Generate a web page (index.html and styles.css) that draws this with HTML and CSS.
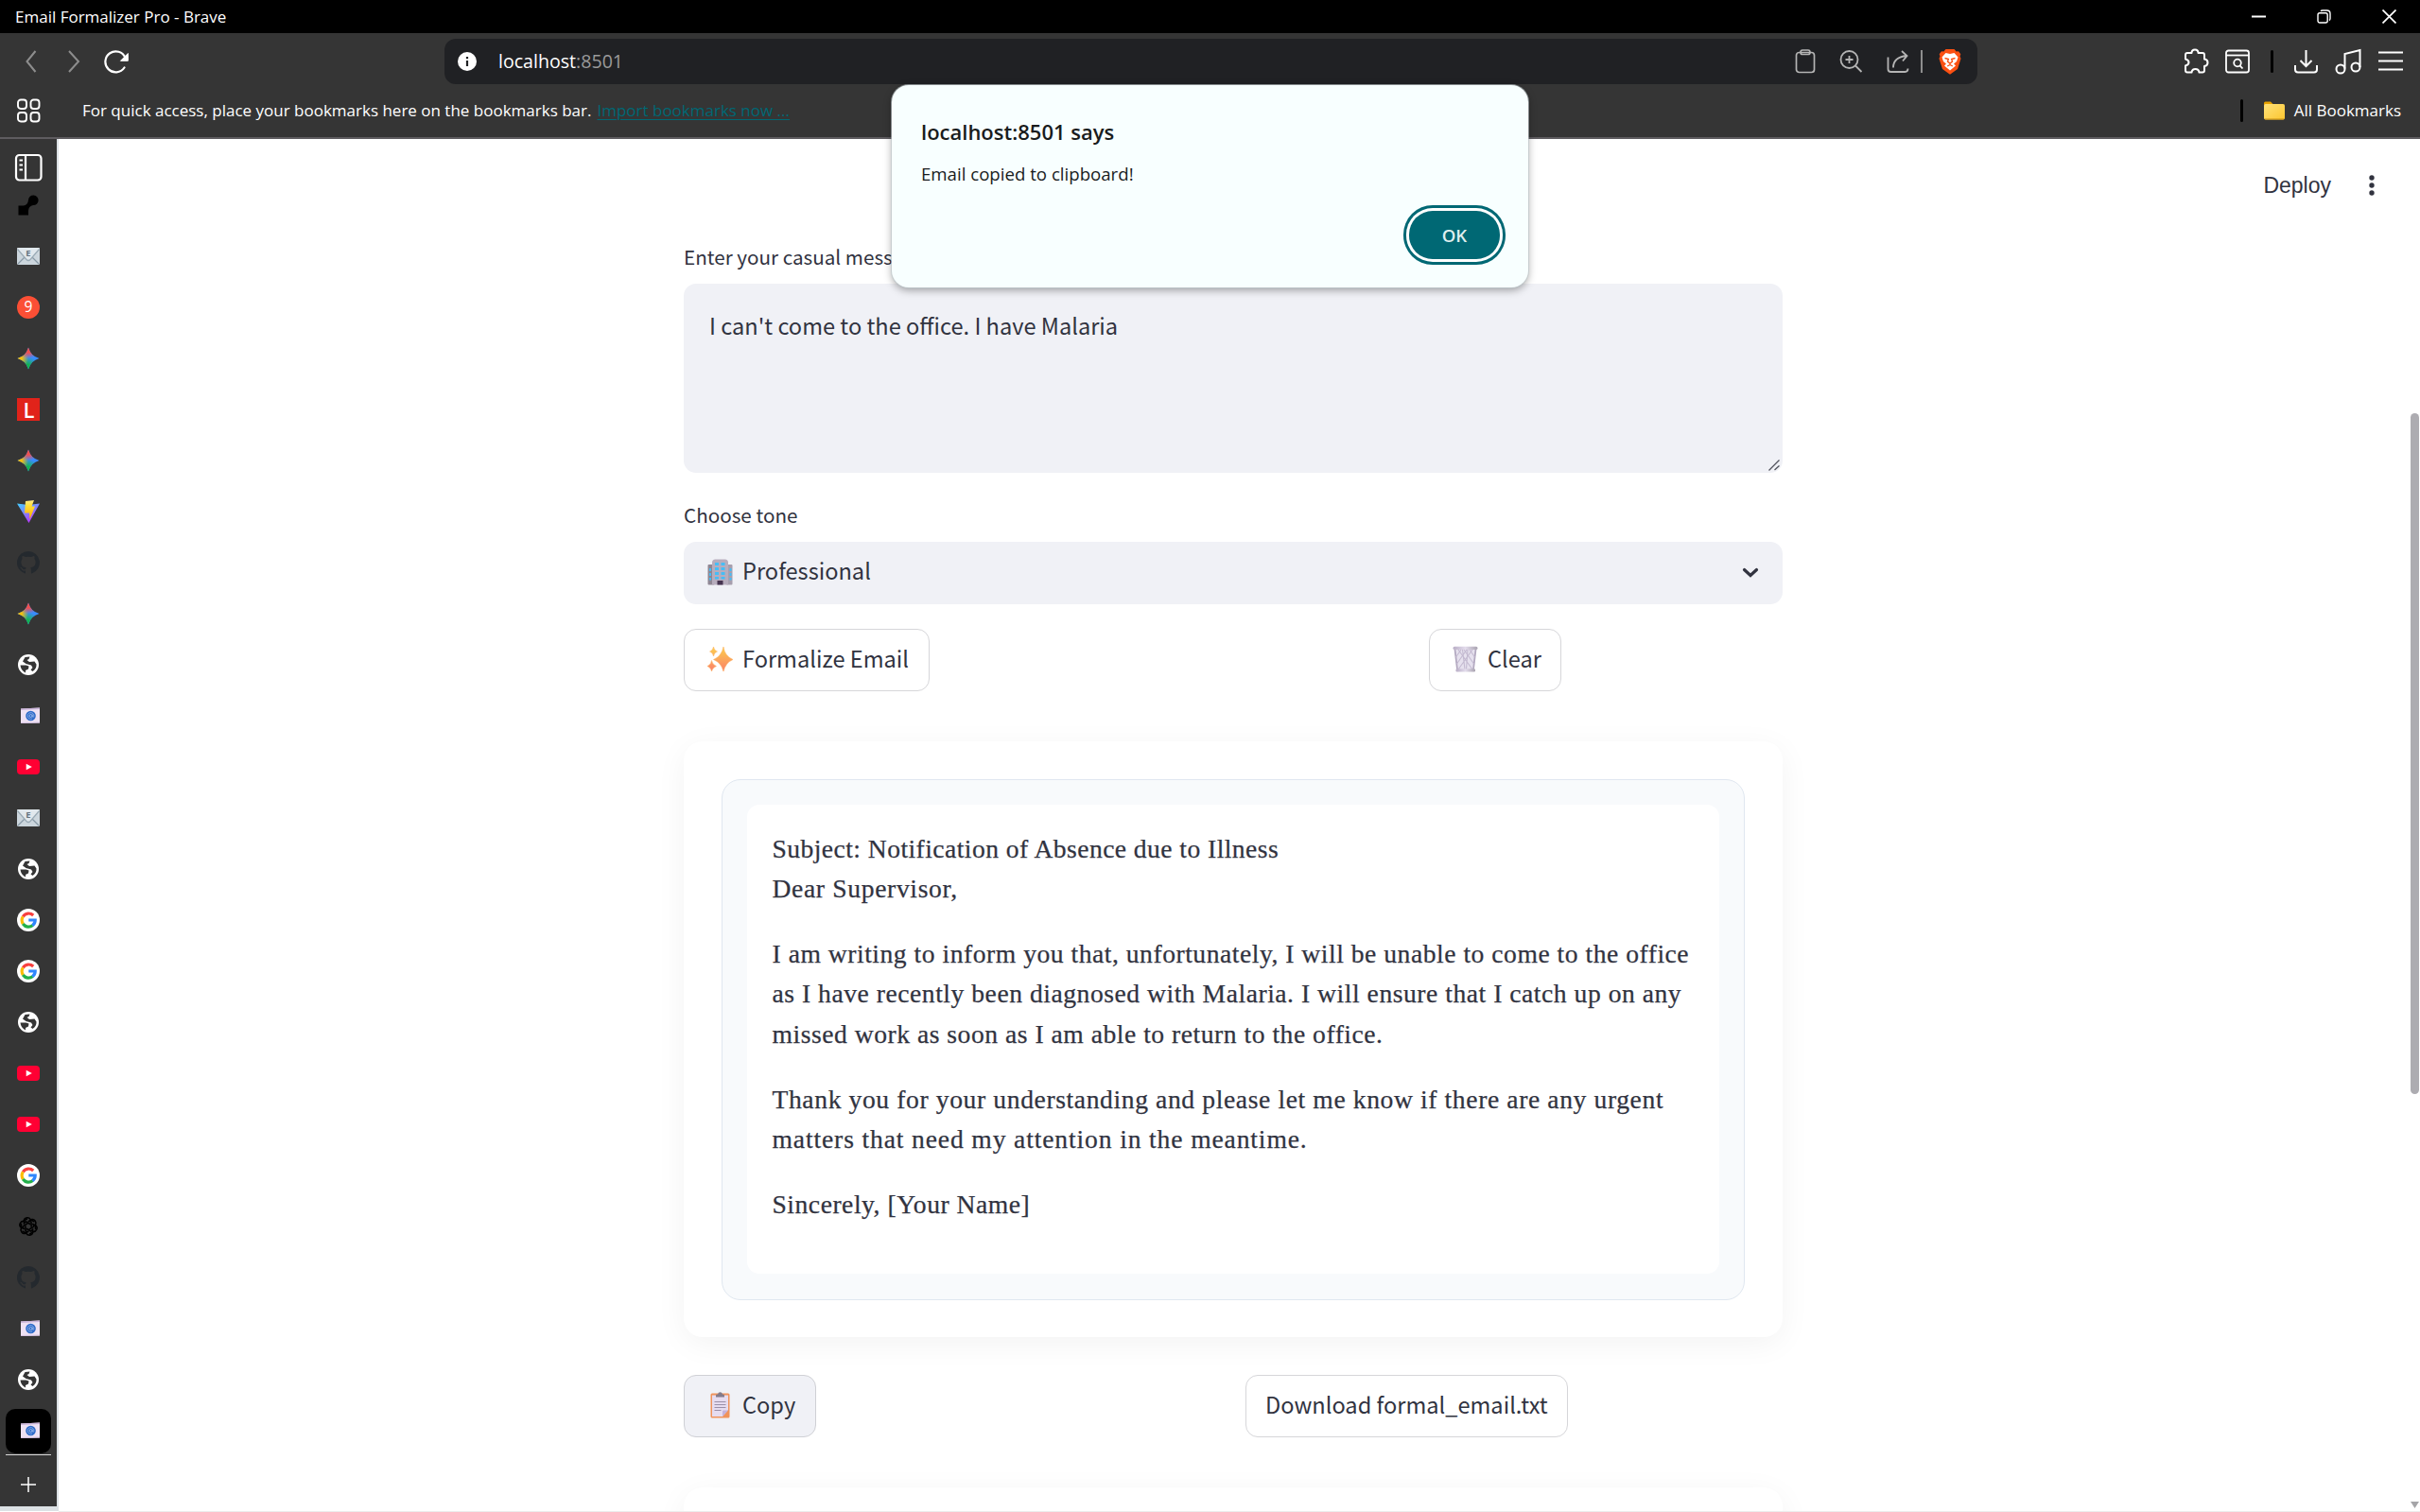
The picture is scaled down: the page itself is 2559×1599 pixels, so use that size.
FILE: index.html
```html
<!DOCTYPE html>
<html lang="en">
<head>
<meta charset="utf-8">
<title>Email Formalizer Pro</title>
<link rel="stylesheet" href="styles.css">
</head>
<body>
<svg class="defs" width="0" height="0" aria-hidden="true">
  <defs>
    <linearGradient id="vite-body" x1="0" y1="0" x2=".6" y2="1"><stop offset="0" stop-color="#41d1ff"/><stop offset="1" stop-color="#bd34fe"/></linearGradient>
    <linearGradient id="vite-bolt" x1="0" y1="0" x2="0" y2="1"><stop offset="0" stop-color="#ffea83"/><stop offset=".3" stop-color="#ffdd35"/><stop offset="1" stop-color="#ffa800"/></linearGradient>
    <linearGradient id="spark" x1="0" y1="0" x2="0" y2="1"><stop offset="0" stop-color="#fcd04a"/><stop offset="1" stop-color="#fb7d6b"/></linearGradient>
    <linearGradient id="folder" x1="0" y1="0" x2="1" y2="1"><stop offset="0" stop-color="#ffe27a"/><stop offset="1" stop-color="#fcc62f"/></linearGradient>
    <linearGradient id="bin" x1="0" y1="0" x2="1" y2="0"><stop offset="0" stop-color="#b9aec6"/><stop offset=".5" stop-color="#e3dcec"/><stop offset="1" stop-color="#a9a3b0"/></linearGradient>
    <symbol id="mail" viewBox="0 0 24 24">
      <rect y="3" width="24" height="18" rx="1.5" fill="#ccd6dd"/>
      <path d="M1 20 9 12M23 20 15 12" stroke="#8899a6" stroke-width="1.2"/>
      <path d="M0 4.200C0 3.500.6 3 1.500 3H22.500C23.400 3 24 3.500 24 4.200L14 15.500Q12 17.500 10 15.500Z" fill="#e1e8ed"/>
      <path d="M.5 4.500 10 15.500Q12 17.500 14 15.500L23.500 4.500" fill="none" stroke="#99aab5" stroke-width="1.200"/>
      <text x="12" y="12" text-anchor="middle" font-family="Open Sans, sans-serif" font-weight="700" font-size="9.500" fill="#66757f">E</text>
    </symbol>
    <symbol id="gpt" viewBox="0 0 24 24">
      <g fill="none" stroke="#000" stroke-width="1.700">
        <path id="petal" d="M14.500 9.500 9 6.500Q7 7.500 7 9.500V4.500C7.500 1.800 12.500.800 14.500 4L19 6.500"/>
        <use href="#petal" transform="rotate(60 12 12)"/><use href="#petal" transform="rotate(120 12 12)"/>
        <use href="#petal" transform="rotate(180 12 12)"/><use href="#petal" transform="rotate(240 12 12)"/><use href="#petal" transform="rotate(300 12 12)"/>
      </g>
    </symbol>
    <symbol id="github" viewBox="0 0 24 24">
      <path fill="#24292e" d="M12 0a12 12 0 0 0-3.800 23.400c.6.100.8-.3.800-.6v-2.200c-3.300.7-4-1.400-4-1.400-.6-1.400-1.400-1.800-1.400-1.800-1-.7.100-.7.100-.7 1.200.1 1.900 1.200 1.900 1.200 1 1.900 2.800 1.300 3.500 1 .1-.8.400-1.300.7-1.600-2.700-.3-5.400-1.300-5.400-6 0-1.300.5-2.400 1.200-3.200-.1-.3-.5-1.500.1-3.200 0 0 1-.3 3.300 1.200a11.500 11.500 0 0 1 6 0C17.300 4.600 18.300 4.900 18.300 4.900c.6 1.700.2 2.900.1 3.200.8.8 1.200 1.900 1.200 3.200 0 4.700-2.800 5.700-5.500 6 .4.400.8 1.100.8 2.200v3.300c0 .3.200.7.800.6A12 12 0 0 0 12 0z"/>
    </symbol>
    <symbol id="globe" viewBox="0 0 24 24">
      <circle cx="12" cy="12" r="11" fill="#fff"/>
      <path d="M3.500 12.500H9.500L12.500 13.500 12 16.500 9 18 9 20.500Q4 18 3.500 12.500ZM8.500 4 13.500 3.500 12.500 6 10.500 7 13 9 18.500 8.500 20.500 11.500Q20.800 16 16.500 19L14.500 17.500 16.500 15 15 12.500 9.500 11 6 8.500Z" fill="#353535"/>
    </symbol>
    <symbol id="card" viewBox="0 0 24 24">
      <path d="M4 4.500 24 3.500V19.500L4 20Z" fill="#eee1f3"/>
      <path d="M4 4.500 24 3.500V5L4 6Z" fill="#cbb5da"/>
      <path d="M4 19 24 18.500V19.500L4 20Z" fill="#d6c2e2"/>
      <circle cx="14.500" cy="12" r="5.300" fill="#2f6bc8"/>
      <circle cx="14.500" cy="12" r="1.500" fill="none" stroke="#9dbbee" stroke-width=".9"/>
      <path d="M16.300 10.500V13Q17.800 14 17.900 12A3.400 3.400 0 1 0 16 15.100" fill="none" stroke="#9dbbee" stroke-width=".7"/>
    </symbol>
    <symbol id="youtube" viewBox="0 0 24 24">
      <rect y="4" width="24" height="16" rx="4" fill="#ff0033"/><path d="M9.700 8.700 15.800 12 9.700 15.300Z" fill="#fff"/>
    </symbol>
    <symbol id="google" viewBox="0 0 24 24">
      <circle cx="12" cy="12" r="12" fill="#fff"/>
      <g fill="none" stroke-width="3.200">
        <path d="M6.300 8.300A7.100 7.100 0 0 1 17.200 7" stroke="#f8403f"/>
        <path d="M6.400 16A7.100 7.100 0 0 1 6.300 8.300" stroke="#fbbc05"/>
        <path d="M16.600 17.600A7.100 7.100 0 0 1 6.300 16" stroke="#24b04b"/>
        <path d="M12.300 12H19.200A7.100 7.100 0 0 1 16.400 17.700" stroke="#2f86fd"/>
      </g>
    </symbol>
  </defs>
</svg>

<header class="titlebar">
  <span class="window-title">Email Formalizer Pro - Brave</span>
  <span class="window-controls">
    <svg width="15" height="15"><path d="M0 7.500H15" stroke="#fff" stroke-width="2"/></svg>
    <svg width="15" height="15" fill="none" stroke="#fff" stroke-width="1.400"><rect x="1" y="3.800" width="10.200" height="10.200" rx="2"/><path d="M4 1.800Q4.500 1 6 1H10.500Q14 1 14 4.500V9.500Q14 11 13 11.500"/></svg>
    <svg width="15" height="15"><path d="M.5.500 14.500 14.500M14.500.500.500 14.500" stroke="#fff" stroke-width="1.700"/></svg>
  </span>
</header>

<nav class="toolbar">
  <svg class="nav-arrow" width="26" height="26"><path d="M17.500 2 8.500 13 17.500 24" fill="none" stroke="#8d8d8d" stroke-width="2"/></svg>
  <svg class="nav-arrow" width="26" height="26"><path d="M8 2 18 13 8 24" fill="none" stroke="#8d8d8d" stroke-width="2"/></svg>
  <svg width="26" height="26"><path d="M21.500 19.500A11 11 0 1 1 22.500 9" fill="none" stroke="#fff" stroke-width="2.200" stroke-linecap="round"/><path d="M25.300 4.500V12.300H17.500Z" fill="#fff" stroke="#fff" stroke-linejoin="round"/></svg>
  <div class="address">
    <svg width="20" height="20"><circle cx="10" cy="10" r="10" fill="#fff"/><path d="M10 9V15M10 5V7.200" stroke="#202124" stroke-width="2.200"/></svg>
    <span class="url">localhost<span class="port">:8501</span></span>
    <span class="address-icons">
      <svg width="24" height="26" fill="none" stroke="#b4b4b4" stroke-width="1.700"><rect x="2.500" y="3.500" width="19" height="21" rx="3"/><path d="M7 3.500Q7 1 9 1H15Q17 1 17 3.500Q17 5.500 15 5.500H9Q7 5.500 7 3.500Z"/></svg>
      <svg width="26" height="26" fill="none" stroke="#b4b4b4" stroke-width="1.800"><circle cx="10.500" cy="11" r="9"/><path d="M17 17.500 23.500 24M10.500 7V15M6.500 11H14.500"/></svg>
      <svg width="26" height="26" fill="none" stroke="#b4b4b4" stroke-width="1.800"><path d="M2.500 8.500V21Q2.500 24 5.500 24H20.500Q23.500 24 23.500 20.500"/><path d="M8 19.500Q8 8.500 22 7M17 2 22.500 7 18 12.500"/></svg>
      <i class="address-divider"></i>
      <svg width="26" height="28"><path d="M8.500 1H17.500L19.700 3.500 22 3.200 24.300 6.300 23.500 8.500 24.500 11 21 22 13 27.800 5 22 1.500 11 2.500 8.500 1.700 6.300 4 3.200 6.300 3.500Z" fill="#fb5012"/><path d="M8.500 5 13 6 17.500 5 21.500 9.500 20 14 17 16.500 19 18.500 13 23.500 7 18.500 9 16.500 6 14 4.500 9.500Z" fill="#fff"/><path d="M7.500 10.500 11.300 11.500 10.500 14 13 16 15.500 14 14.700 11.500 18.500 10.500M13 16V18M10.200 19 13 17.500 15.800 19" fill="none" stroke="#fb5012" stroke-width="1.400"/></svg>
    </span>
  </div>
  <div class="toolbar-icons">
    <svg width="28" height="28" fill="none" stroke="#fff" stroke-width="2" stroke-linejoin="round"><path d="M5 5H9.500Q9.500 1.500 13 1.500T16.500 5H21Q23 5 23 7V11.500Q26.500 12 26.500 15.200T23 19V23.500Q23 25.500 21 25.500H17.500Q17 22 13.500 22T9.500 25.500H5Q3 25.500 3 23.500V18.500Q6.500 17.500 6.500 15T3 11.500V7Q3 5 5 5Z"/></svg>
    <svg width="26" height="26" fill="none" stroke="#fff" stroke-width="1.800"><rect x="1" y="1.500" width="24" height="23" rx="2.500"/><path d="M1 6.500H25"/><circle cx="13" cy="14.500" r="3.800"/><path d="M15.500 17.300 18.500 20.500"/></svg>
    <i class="toolbar-divider"></i>
    <svg width="26" height="26" fill="none" stroke="#fff" stroke-width="2"><path d="M12.500 1V17.500M6.500 12 12.500 18 18.500 12M1 17V21.500Q1 24.500 4 24.500H21Q24 24.500 24 21.500V17"/></svg>
    <svg width="28" height="28" fill="none" stroke="#fff" stroke-width="2"><path d="M10.500 21.500V6L26.500 2V20"/><circle cx="6" cy="22" r="4.500"/><circle cx="22" cy="20" r="4.500"/></svg>
    <svg width="26" height="26"><path d="M0 3.500H26M0 12.500H26M0 21.500H26" stroke="#fff" stroke-width="2"/></svg>
  </div>
</nav>

<div class="bookmarks">
  <svg width="25" height="26" fill="none" stroke="#fff" stroke-width="1.900"><rect x="1" y="1.500" width="9" height="9.500" rx="3"/><rect x="14.500" y="1.500" width="9" height="9.500" rx="3"/><rect x="1" y="15" width="9" height="9.500" rx="3"/><rect x="14.500" y="15" width="9" height="9.500" rx="3"/></svg>
  <span class="bookmarks-hint">For quick access, place your bookmarks here on the bookmarks bar.</span>
  <a class="bookmarks-import">Import bookmarks now ...</a>
  <div class="all-bookmarks">
    <i class="toolbar-divider"></i>
    <svg width="22" height="20"><path d="M0 2Q0 .5 1.500.500H7L9.500 3H20V10H0Z" fill="#e8a200"/><rect y="3" width="22" height="16.500" rx="1.800" fill="url(#folder)"/><path d="M1 19H21" stroke="#c98f12" stroke-width="1"/></svg>
    <span>All Bookmarks</span>
  </div>
</div>

<div class="workspace">
  <aside class="tabs">
    <div class="panel-toggle"><svg width="30" height="30" fill="none" stroke="#fff" stroke-width="2.200"><rect x="2" y="2" width="26.500" height="26.500" rx="3.500"/><path d="M12 2V28"/><path d="M5.500 7.500H9M5.500 12.500H9M5.500 17.500H9"/></svg></div>
    <div class="tab"><svg width="24" height="24"><path d="M1.500 12.500H6.500Q11.500 12 12 6.500A5.300 5.300 0 1 1 17 12Q12.200 13 12 18V22.500H1.500Z" fill="#000"/></svg></div>
    <div class="tab"><svg width="24" height="24"><use href="#mail"/></svg></div>
    <div class="tab"><svg width="24" height="24"><circle cx="12" cy="12" r="12" fill="#fb4f35"/><text x="12" y="17.200" text-anchor="middle" font-family="Open Sans, sans-serif" font-size="15.500" fill="#fff">9</text></svg></div>
    <div class="tab"><i class="gem"></i></div>
    <div class="tab"><svg width="24" height="24"><rect width="24" height="24" fill="#e1231a"/><text x="12.500" y="20.500" text-anchor="middle" font-family="Open Sans, sans-serif" font-weight="600" font-size="22" fill="#fff">L</text></svg></div>
    <div class="tab"><i class="gem"></i></div>
    <div class="tab"><svg width="24" height="24"><path d="M0 3.500 12 5 24 3.500 12.500 24Z" fill="url(#vite-body)"/><path d="M9 1 18 0 15.500 6.500H19L13.500 20 13 13.500H8Z" fill="url(#vite-bolt)"/></svg></div>
    <div class="tab"><svg width="24" height="24"><use href="#github"/></svg></div>
    <div class="tab"><i class="gem"></i></div>
    <div class="tab"><svg width="24" height="24"><use href="#globe"/></svg></div>
    <div class="tab"><svg width="24" height="24"><use href="#card"/></svg></div>
    <div class="tab"><svg width="24" height="24"><use href="#youtube"/></svg></div>
    <div class="tab"><svg width="24" height="24"><use href="#mail"/></svg></div>
    <div class="tab"><svg width="24" height="24"><use href="#globe"/></svg></div>
    <div class="tab"><svg width="24" height="24"><use href="#google"/></svg></div>
    <div class="tab"><svg width="24" height="24"><use href="#google"/></svg></div>
    <div class="tab"><svg width="24" height="24"><use href="#globe"/></svg></div>
    <div class="tab"><svg width="24" height="24"><use href="#youtube"/></svg></div>
    <div class="tab"><svg width="24" height="24"><use href="#youtube"/></svg></div>
    <div class="tab"><svg width="24" height="24"><use href="#google"/></svg></div>
    <div class="tab"><svg width="22" height="22"><use href="#gpt"/></svg></div>
    <div class="tab"><svg width="24" height="24"><use href="#github"/></svg></div>
    <div class="tab"><svg width="24" height="24"><use href="#card"/></svg></div>
    <div class="tab"><svg width="24" height="24"><use href="#globe"/></svg></div>
    <div class="tab tab-active"><span><svg width="24" height="24"><use href="#card"/></svg></span></div>
    <div class="tab-new"><svg width="16" height="16"><path d="M8 0V16M0 8H16" stroke="#fff" stroke-width="1.500"/></svg></div>
  </aside>

  <main class="page">
    <div class="app-header">
      <span>Deploy</span>
      <svg width="8" height="24" fill="#31333f"><circle cx="4" cy="4" r="2.700"/><circle cx="4" cy="12" r="2.700"/><circle cx="4" cy="20" r="2.700"/></svg>
    </div>

    <div class="column">
      <label class="label label-message">Enter your casual message:</label>
      <div class="textarea">I can't come to the office. I have Malaria
        <svg class="resize" width="12" height="12"><path d="M.5 11.500 11.500.500M6.500 11 11.500 6.500" stroke="#50525c" stroke-width="1.300"/></svg>
      </div>
      <label class="label label-tone">Choose tone</label>
      <div class="select">
        <svg class="emoji" width="27" height="28">
          <rect x=".5" y="6" width="7" height="21.500" rx="1" fill="#8f8794"/><rect x="20" y="6" width="6.500" height="21.500" rx="1" fill="#a79fae"/>
          <path d="M5 4Q5 .5 8.500.500H18.500Q22 .5 22 4V27.500H5Z" fill="#b7adbd"/>
          <g fill="#46bdf5"><path d="M8 4H12V7H8ZM14.500 4H18.500V7H14.500ZM8 9H12V12H8ZM14.500 9H18.500V12H14.500ZM8 14H12V17H8ZM14.500 14H18.500V17H14.500ZM8 19H12V21.500H8ZM14.500 19H18.500V21.500H14.500Z"/><path d="M2 10H4V13H2ZM2 15H4V18H2ZM2 20H4V22.500H2ZM23.500 10H25.500V13H23.500ZM23.500 15H25.500V18H23.500ZM23.500 20H25.500V22.500H23.500Z"/></g>
          <rect x="10.500" y="23" width="6" height="4.500" fill="#463450"/>
        </svg>
        <span>Professional</span>
        <svg class="chevron" width="18" height="12"><path d="M2.500 2.500 9 8.500 15.500 2.500" fill="none" stroke="#31333f" stroke-width="3.200" stroke-linecap="round"/></svg>
      </div>

      <div class="actions actions-form">
        <button class="button">
          <svg class="emoji" width="27" height="26"><path d="M17 0Q18.500 10 27 13.500 19 17 17 26.500 15 17 6.500 13.500 15 10 17 0ZM6.500 0Q7.200 4 10.500 5 7.200 6 6.500 10 5.800 6 2.500 5 5.800 4 6.500 0ZM4.500 14.500Q5.500 19 9.500 20.500 5.500 22 4.500 26 3.800 22 0 20.500 3.800 19 4.500 14.500Z" fill="url(#spark)" stroke="#fcae5c" stroke-width=".5"/></svg>
          <span>Formalize Email</span>
        </button>
        <button class="button button-clear">
          <svg class="emoji" width="27" height="28"><path d="M2 3H25L22.500 25H4.500Z" fill="#e6e1ee"/><path d="M2.500 4 5 25M24.500 4 22 25" stroke="#b3a9c0" stroke-width="1.800"/><path d="M6 4 21 25M12 4 22.500 19M18 4 23.500 12M21 4 6 25M15 4 4.500 19M9 4 3.500 12M10.500 4 13 25M16 4 14.500 25" fill="none" stroke="#c3b9d0" stroke-width="1.100"/><rect x=".5" y=".8" width="26" height="3.200" rx="1.600" fill="url(#bin)"/><rect x="3.500" y="24.300" width="20.500" height="3.200" rx="1.200" fill="url(#bin)"/></svg>
          <span>Clear</span>
        </button>
      </div>

      <section class="card">
        <div class="email-frame">
          <article class="email">
            <p><span class="l1">Subject: Notification of Absence due to Illness</span><span class="l2">Dear Supervisor,</span></p>
            <p><span class="l3">I am writing to inform you that, unfortunately, I will be unable to come to the office</span><span class="l4">as I have recently been diagnosed with Malaria. I will ensure that I catch up on any</span><span class="l5">missed work as soon as I am able to return to the office.</span></p>
            <p><span class="l6">Thank you for your understanding and please let me know if there are any urgent</span><span class="l7">matters that need my attention in the meantime.</span></p>
            <p><span class="l8">Sincerely, [Your Name]</span></p>
          </article>
        </div>
      </section>

      <div class="actions actions-result">
        <button class="button button-active">
          <svg class="emoji" width="27" height="28"><rect x="3.500" y="1.500" width="20" height="26" rx="1.500" fill="#f0935b"/><path d="M5 3.500H22V19L16 26H5Z" fill="#e6dcf0"/><path d="M22 19.500 16 26V20.500Q16 19.500 17 19.500Z" fill="#c4b2dd"/><path d="M9 5.500V3.500Q9 2.500 11 2.500 11.500.200 13.500.200T16 2.500Q18 2.500 18 3.500V5.500Z" fill="#837b8b"/><path d="M7.500 10.500H19.500M7.500 13.500H19.500M7.500 16.500H19.500M7.500 19.500H14.500" stroke="#9a8fa8" stroke-width="1.200"/></svg>
          <span>Copy</span>
        </button>
        <button class="button button-download"><span>Download formal_email.txt</span></button>
      </div>

      <section class="card card-next"></section>
    </div>

    <i class="scroll-thumb"></i>
    <i class="scroll-down"></i>
  </main>
</div>

<div class="dialog">
  <h1>localhost:8501 says</h1>
  <p>Email copied to clipboard!</p>
  <button class="dialog-ok">OK</button>
</div>
</body>
</html>
```
FILE: styles.css
```css
* { box-sizing: border-box; }

body {
  margin: 0;
  width: 2559px;
  height: 1599px;
  overflow: hidden;
  display: flex;
  flex-direction: column;
  background: #fff;
  font-family: "Open Sans", "Noto Sans", sans-serif;
  white-space: nowrap;
}

svg { display: block; flex: none; }
.defs { position: absolute; }
button, h1, p { margin: 0; font-family: inherit; }

/* Window chrome */
.titlebar {
  flex: none;
  height: 35px;
  padding: 0 25px 0 16px;
  display: flex;
  align-items: center;
  justify-content: space-between;
  background: #000;
  color: #fff;
}
.window-title { font-size: 17px; line-height: 35px; }
.window-controls { display: flex; gap: 54px; }

.toolbar {
  flex: none;
  height: 60px;
  padding: 0 18px 0 20px;
  display: flex;
  align-items: center;
  background: #353535;
}
.nav-arrow { margin-right: 19px; }
.address {
  width: 1621px;
  height: 48px;
  margin-left: 334px;
  padding: 0 16px 0 14px;
  display: flex;
  align-items: center;
  border-radius: 12px;
  background: #202124;
}
.url {
  margin-left: 23px;
  font-size: 19.600px;
  line-height: 48px;
  color: #fff;
}
.port { color: #9a9a9a; }
.address-icons { display: flex; align-items: center; margin-left: auto; }
.address-icons svg + svg { margin-left: 23.500px; }
.address-divider { width: 2px; height: 24px; margin: 0 16px 0 11px; background: #8e8e8e; }
.toolbar-icons { display: flex; align-items: center; gap: 17.700px; margin-left: auto; }
.toolbar-divider { width: 3px; height: 24px; margin: 0 4px; border-radius: 1.500px; background: #000; }

.bookmarks {
  flex: none;
  height: 52px;
  padding: 0 20px 7px 18px;
  display: flex;
  align-items: center;
  background: #353535;
  border-bottom: 2px solid #5e5c60;
  color: #fff;
  font-size: 17px;
}
.bookmarks-hint { margin-left: 44px; }
.bookmarks-import { margin-left: 6px; color: #006874; text-decoration: underline; text-underline-offset: 3px; }
.all-bookmarks { display: flex; align-items: center; margin-left: auto; gap: 10px; }
.all-bookmarks .toolbar-divider { margin: 0 12px 0 0; }

/* Vertical tab strip */
.workspace { flex: 1; min-height: 0; display: flex; }
.tabs {
  flex: none;
  width: 62px;
  height: 1451px;
  display: flex;
  flex-direction: column;
  background: #353535;
  border-right: 2px solid #dce1e5;
  border-bottom: 5px solid #dce1e5;
}
.panel-toggle { height: 43px; padding: 15px 0 0 15px; }
.tab { height: 54px; display: flex; align-items: center; justify-content: center; }
.tab-active span {
  width: 48px;
  height: 47px;
  display: flex;
  align-items: center;
  justify-content: center;
  border-radius: 10px;
  background: #000;
}
.tab-new {
  margin: -2px 6px 0;
  padding-top: 22.500px;
  display: flex;
  justify-content: center;
  border-top: 1.500px solid #d8d8d8;
}
.gem {
  width: 24px;
  height: 24px;
  background:
    radial-gradient(circle at 50% 0, #f2504e 22%, rgba(242, 80, 78, 0) 45%),
    radial-gradient(circle at 0 50%, #fbc004 18%, rgba(251, 192, 4, 0) 45%),
    radial-gradient(circle at 45% 100%, #12b450 20%, rgba(18, 180, 80, 0) 50%),
    #3a8bff;
  clip-path: path("M12 .5Q14.500 9.500 23.500 12 14.500 14.500 12 23.500 9.500 14.500 .5 12 9.500 9.500 12 .5Z");
}

/* App page */
.page {
  flex: 1;
  position: relative;
  height: 1452px;
  overflow: hidden;
  border-bottom: 1px solid #ececec;
  background: #fff;
  color: #31333f;
}
.app-header {
  height: 98px;
  padding-right: 47px;
  display: flex;
  align-items: center;
  justify-content: flex-end;
  gap: 39px;
  font: 23px/98px "Liberation Sans", Arial, sans-serif;
}
.column {
  width: 1162px;
  margin-left: 661px;
  font-family: "Noto Sans CJK SC", sans-serif;
  font-size: 23.600px;
}
.label { display: block; font-size: 20.650px; }
.label-message { line-height: 53px; margin-bottom: 2px; }
.label-tone { line-height: 33px; margin: 28px 0 12px; }
.textarea {
  position: relative;
  height: 200px;
  padding: 23px 27px;
  line-height: 42px;
  border-radius: 13px;
  background: #f0f1f6;
}
.resize { position: absolute; right: 3px; bottom: 2px; }
.select {
  height: 66px;
  padding: 0 25px 0 25px;
  display: flex;
  align-items: center;
  border-radius: 13px;
  background: #f0f1f6;
}
.select span { line-height: 30px; padding-bottom: 7px; }
.emoji { margin: 0 10px 3px 0; }
.chevron { margin-left: auto; }

.actions { display: flex; align-items: flex-start; }
.actions-form { margin-top: 26px; }
.actions-result { margin-top: 40px; }
.button {
  height: 66px;
  padding: 0 0 0 24px;
  display: flex;
  align-items: center;
  border: 1px solid #d6d6d9;
  border-radius: 13px;
  background: #fff;
  color: #31333f;
  font-size: 23.600px;
}
.button span { line-height: 30px; padding-bottom: 5px; }
.actions-form .button { width: 260px; }
.actions-form .button-clear { width: 140px; margin-left: 528px; }
.button-active { width: 140px; background: #f0f1f6; border-color: #cfd0d5; }
.button-download { width: 341px; margin-left: 454px; padding-left: 20px; }

.card {
  height: 630px;
  margin-top: 53px;
  padding: 40px;
  border-radius: 20px;
  background: #fff;
  box-shadow: 0 7px 33px rgba(0, 0, 0, .05);
}
.email-frame {
  height: 551px;
  padding: 26px;
  border: 1px solid #e0e7f0;
  border-radius: 20px;
  background: #f8fafc;
}
.email {
  height: 496px;
  padding: 26px 26.500px;
  border-radius: 13px;
  background: #fff;
  font: 27.600px/42.240px "Liberation Serif", serif;
  -webkit-text-stroke: .25px #31333f;
}
.email p { margin-bottom: 26.700px; }
.email span { display: block; }
.l1 { letter-spacing: .44px; }
.l2 { letter-spacing: .65px; }
.l3 { letter-spacing: .52px; }
.l4 { letter-spacing: .53px; }
.l5 { letter-spacing: .52px; }
.l6 { letter-spacing: .61px; }
.l7 { letter-spacing: .86px; }
.l8 { letter-spacing: .52px; }

/* Scrollbar over the page edge */
.scroll-thumb {
  position: absolute;
  top: 290px;
  right: 1px;
  width: 9px;
  height: 720px;
  border-radius: 4.500px;
  background: #adacb1;
}
.scroll-down {
  position: absolute;
  bottom: 3px;
  right: 1px;
  width: 9px;
  height: 7px;
  background: #a5a5a8;
  clip-path: polygon(0 0, 100% 0, 50% 100%);
}

/* Browser alert */
.dialog {
  position: absolute;
  left: 943px;
  top: 90px;
  width: 673px;
  height: 214px;
  padding: 34px 25px 24px 31px;
  display: flex;
  flex-direction: column;
  border-radius: 18px;
  background: #f8ffff;
  color: #191c1d;
  box-shadow: 0 0 0 1px rgba(190, 200, 203, .6), 0 3px 8px rgba(0, 0, 0, .35);
}
.dialog h1 { font-size: 22px; font-weight: 600; line-height: 30px; }
.dialog p { margin-top: 16px; font-size: 18.650px; line-height: 28px; }
.dialog-ok {
  width: 96px;
  height: 51px;
  margin: 25px 5px 0 auto;
  flex: none;
  border: 0;
  border-radius: 25px;
  background: #006874;
  color: #dfeeee;
  font-size: 18.600px;
  font-weight: 600;
  box-shadow: 0 0 0 3px #fff, 0 0 0 6px #006874;
}
```
